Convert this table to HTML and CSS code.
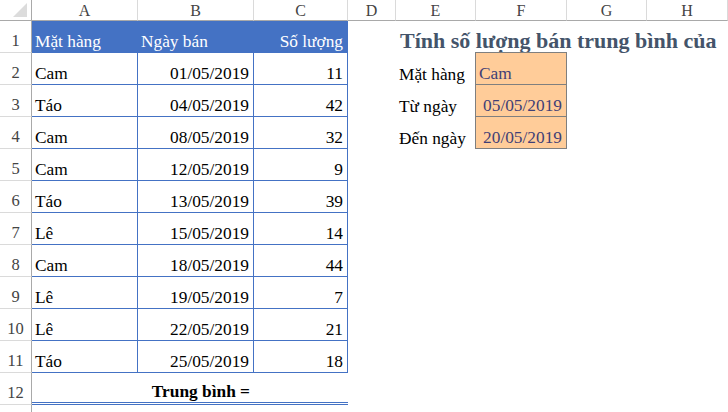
FILE: index.html
```html
<!DOCTYPE html>
<html lang="vi">
<head>
<meta charset="utf-8">
<title>Sheet</title>
<link rel="stylesheet" href="styles.css">
</head>
<body>
<div class="sheet">
  <div class="corner"><svg width="14" height="14" viewBox="0 0 14 14"><polygon points="14,0 14,14 0,14" fill="#dcdcdc"/></svg></div>
  <div class="ch">A</div><div class="ch">B</div><div class="ch">C</div><div class="ch">D</div><div class="ch">E</div><div class="ch">F</div><div class="ch">G</div><div class="ch">H</div>

  <div class="rh">1</div>
  <div class="c t th">Mặt hàng</div><div class="c t th">Ngày bán</div><div class="c t th r">Số lượng</div>
  <div class="c"></div><div class="c title">Tính số lượng bán trung bình của</div><div class="c in-top"></div><div class="c"></div><div class="c"></div>

  <div class="rh">2</div>
  <div class="c t">Cam</div><div class="c t r">01/05/2019</div><div class="c t r">11</div>
  <div class="c"></div><div class="c">Mặt hàng</div><div class="c in">Cam</div><div class="c"></div><div class="c"></div>

  <div class="rh">3</div>
  <div class="c t">Táo</div><div class="c t r">04/05/2019</div><div class="c t r">42</div>
  <div class="c"></div><div class="c">Từ ngày</div><div class="c in r">05/05/2019</div><div class="c"></div><div class="c"></div>

  <div class="rh">4</div>
  <div class="c t">Cam</div><div class="c t r">08/05/2019</div><div class="c t r">32</div>
  <div class="c"></div><div class="c">Đến ngày</div><div class="c in r">20/05/2019</div><div class="c"></div><div class="c"></div>

  <div class="rh">5</div>
  <div class="c t">Cam</div><div class="c t r">12/05/2019</div><div class="c t r">9</div>
  <div class="c"></div><div class="c"></div><div class="c"></div><div class="c"></div><div class="c"></div>

  <div class="rh">6</div>
  <div class="c t">Táo</div><div class="c t r">13/05/2019</div><div class="c t r">39</div>
  <div class="c"></div><div class="c"></div><div class="c"></div><div class="c"></div><div class="c"></div>

  <div class="rh">7</div>
  <div class="c t">Lê</div><div class="c t r">15/05/2019</div><div class="c t r">14</div>
  <div class="c"></div><div class="c"></div><div class="c"></div><div class="c"></div><div class="c"></div>

  <div class="rh">8</div>
  <div class="c t">Cam</div><div class="c t r">18/05/2019</div><div class="c t r">44</div>
  <div class="c"></div><div class="c"></div><div class="c"></div><div class="c"></div><div class="c"></div>

  <div class="rh">9</div>
  <div class="c t">Lê</div><div class="c t r">19/05/2019</div><div class="c t r">7</div>
  <div class="c"></div><div class="c"></div><div class="c"></div><div class="c"></div><div class="c"></div>

  <div class="rh">10</div>
  <div class="c t">Lê</div><div class="c t r">22/05/2019</div><div class="c t r">21</div>
  <div class="c"></div><div class="c"></div><div class="c"></div><div class="c"></div><div class="c"></div>

  <div class="rh">11</div>
  <div class="c t">Táo</div><div class="c t r">25/05/2019</div><div class="c t r">18</div>
  <div class="c"></div><div class="c"></div><div class="c"></div><div class="c"></div><div class="c"></div>

  <div class="rh">12</div>
  <div class="c tot"></div><div class="c tot r b">Trung bình =</div><div class="c tot"></div>
  <div class="c"></div><div class="c"></div><div class="c"></div><div class="c"></div><div class="c"></div>

  <div class="rh"></div>
  <div class="c"></div><div class="c"></div><div class="c"></div>
  <div class="c"></div><div class="c"></div><div class="c"></div><div class="c"></div><div class="c"></div>
</div>
</body>
</html>
```

FILE: styles.css
```css
html, body {
  margin: 0;
  padding: 0;
  background: #ffffff;
  overflow: hidden;
}

.sheet {
  width: 728px;
  height: 412px;
  overflow: hidden;
  display: grid;
  grid-template-columns: 32px 106px 116px 94px 48px 80px 91px 80px 81px;
  grid-template-rows: 21px repeat(13, 32px);
  font-family: "Liberation Serif", "Times New Roman", serif;
  font-size: 17.33px;
  line-height: 20px;
  color: #000000;
}

.sheet > div {
  box-sizing: border-box;
  min-width: 0;
  font-family: "Liberation Serif", "Times New Roman", serif;
}

.corner {
  border-right: 1px solid #a9a9a9;
  border-bottom: 1px solid #a9a9a9;
  display: flex;
  justify-content: flex-end;
  align-items: flex-end;
  padding: 0 4px 3px 0;
}

.corner svg {
  display: block;
}

.ch {
  border-right: 1px solid #dadada;
  border-bottom: 1px solid #a9a9a9;
  display: flex;
  justify-content: center;
  align-items: center;
  color: #444444;
  font-size: 16px;
  padding-top: 1px;
}

.rh {
  border-right: 1px solid #a9a9a9;
  border-bottom: 1px solid #dadada;
  display: flex;
  justify-content: center;
  align-items: flex-end;
  color: #444444;
  font-size: 16.5px;
  padding-bottom: 1px;
}

.c {
  display: flex;
  align-items: flex-end;
  padding: 0 3px;
  white-space: nowrap;
}

.c.r {
  justify-content: flex-end;
  padding-right: 4px;
}

.t {
  border-right: 1px solid #4472c4;
  border-bottom: 1px solid #4472c4;
}

.th {
  background: #4472c4;
  color: #ffffff;
}

.title {
  font-size: 22px;
  font-weight: bold;
  color: #44546a;
  line-height: 25px;
  padding-left: 4px;
}

.in-top {
  border-bottom: 1px solid #7f7f7f;
  margin-left: -1px;
}

.in {
  background: #ffcc99;
  color: #3f3f76;
  border-left: 1px solid #7f7f7f;
  border-right: 1px solid #7f7f7f;
  border-bottom: 1px solid #7f7f7f;
  margin-left: -1px;
}

.tot {
  border-bottom: 3px double #4472c4;
}

.b {
  font-weight: bold;
}
```
